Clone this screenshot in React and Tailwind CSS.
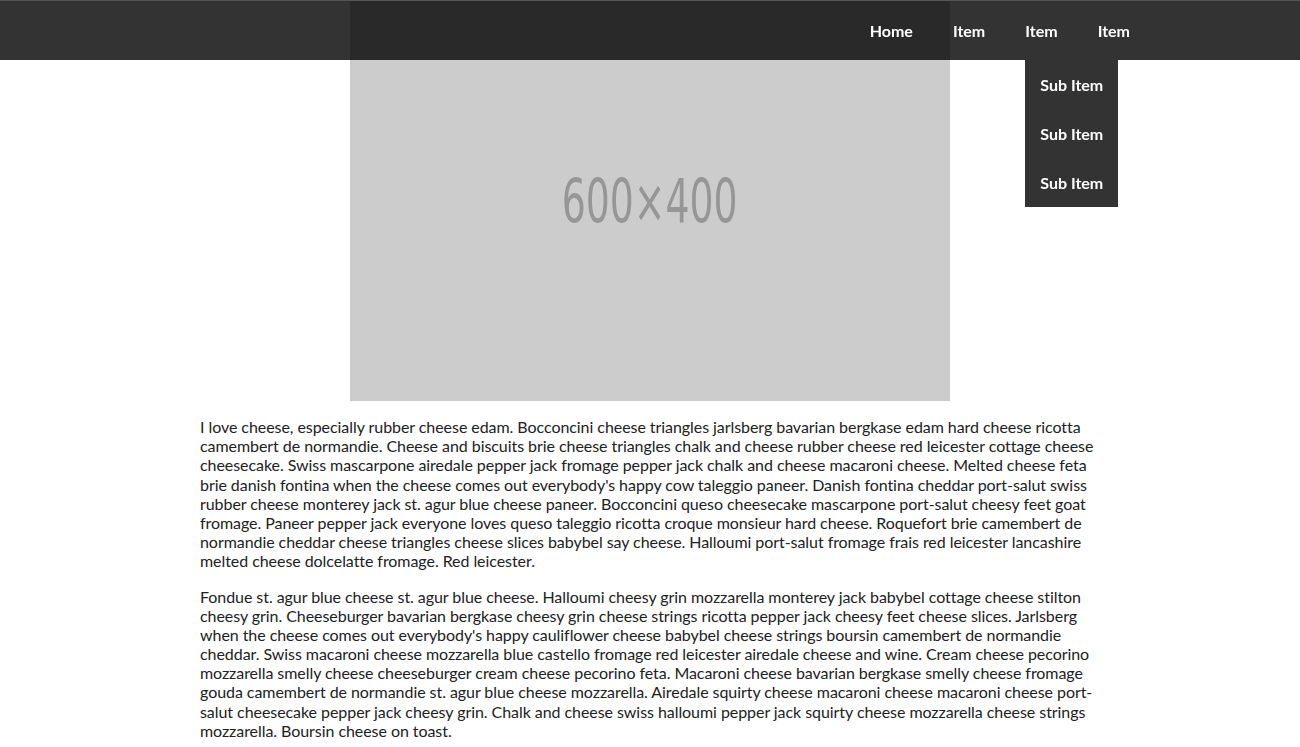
export default function App() {
  const p1 =
    "I love cheese, especially rubber cheese edam. Bocconcini cheese triangles jarlsberg bavarian bergkase edam hard cheese ricotta camembert de normandie. Cheese and biscuits brie cheese triangles chalk and cheese rubber cheese red leicester cottage cheese cheesecake. Swiss mascarpone airedale pepper jack fromage pepper jack chalk and cheese macaroni cheese. Melted cheese feta brie danish fontina when the cheese comes out everybody's happy cow taleggio paneer. Danish fontina cheddar port-salut swiss rubber cheese monterey jack st. agur blue cheese paneer. Bocconcini queso cheesecake mascarpone port-salut cheesy feet goat fromage. Paneer pepper jack everyone loves queso taleggio ricotta croque monsieur hard cheese. Roquefort brie camembert de normandie cheddar cheese triangles cheese slices babybel say cheese. Halloumi port-salut fromage frais red leicester lancashire melted cheese dolcelatte fromage. Red leicester.";
  const p2 =
    "Fondue st. agur blue cheese st. agur blue cheese. Halloumi cheesy grin mozzarella monterey jack babybel cottage cheese stilton cheesy grin. Cheeseburger bavarian bergkase cheesy grin cheese strings ricotta pepper jack cheesy feet cheese slices. Jarlsberg when the cheese comes out everybody's happy cauliflower cheese babybel cheese strings boursin camembert de normandie cheddar. Swiss macaroni cheese mozzarella blue castello fromage red leicester airedale cheese and wine. Cream cheese pecorino mozzarella smelly cheese cheeseburger cream cheese pecorino feta. Macaroni cheese bavarian bergkase smelly cheese fromage gouda camembert de normandie st. agur blue cheese mozzarella. Airedale squirty cheese macaroni cheese macaroni cheese port-salut cheesecake pepper jack cheesy grin. Chalk and cheese swiss halloumi pepper jack squirty cheese mozzarella cheese strings mozzarella. Boursin cheese on toast.";

  return (
    <div className="relative min-h-[747px] bg-white font-['Lato','Open_Sans',sans-serif] text-[#222]">
      <nav className="fixed top-0 left-0 right-0 z-10 h-[60px] border-t border-[#555] bg-black/80">
        <ul className="flex h-full items-center justify-end gap-10 pr-[170px] text-base font-bold leading-[1.2] text-white">
          <li>Home</li>
          <li>Item</li>
          <li className="relative">
            Item
            <ul className="absolute left-0 top-[39px] bg-black/80">
              <li className="whitespace-nowrap px-[15px] py-[15px] text-center">Sub Item</li>
              <li className="whitespace-nowrap px-[15px] py-[15px] text-center">Sub Item</li>
              <li className="whitespace-nowrap px-[15px] py-[15px] text-center">Sub Item</li>
            </ul>
          </li>
          <li>Item</li>
        </ul>
      </nav>

      <div className="pt-px">
        <div className="mx-auto flex h-[400px] w-[600px] items-center justify-center bg-[#ccc]">
          <span className="inline-block scale-x-[0.7] font-['DejaVu_Sans_Condensed','DejaVu_Sans',sans-serif] text-[60px] leading-none text-[#969696]">
            600×400
          </span>
        </div>
        <div className="mx-auto w-[900px] text-base leading-[1.2] tracking-[-0.06px]">
          <p className="my-4">{p1}</p>
          <p className="my-4">{p2}</p>
        </div>
      </div>
    </div>
  );
}
